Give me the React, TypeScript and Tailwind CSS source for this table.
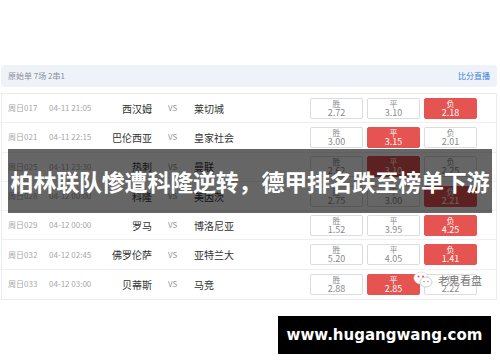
import React from 'react';

type Pick = 0 | 1 | 2;

interface Match {
  code: string;
  time: string;
  home: string;
  away: string;
  odds: [string, string, string];
  pick: Pick;
}

const matches: Match[] = [
  { code: '周日017', time: '04-11 21:05', home: '西汉姆', away: '莱切城', odds: ['2.72', '3.10', '2.18'], pick: 2 },
  { code: '周日021', time: '04-11 22:15', home: '巴伦西亚', away: '皇家社会', odds: ['3.00', '3.15', '2.01'], pick: 1 },
  { code: '周日025', time: '04-11 23:30', home: '热刺', away: '曼联', odds: ['2.62', '3.10', '2.25'], pick: 1 },
  { code: '周日028', time: '04-12 00:00', home: '科隆', away: '美因茨', odds: ['2.75', '3.00', '2.21'], pick: 2 },
  { code: '周日029', time: '04-12 00:00', home: '罗马', away: '博洛尼亚', odds: ['1.52', '3.95', '4.25'], pick: 2 },
  { code: '周日032', time: '04-12 02:45', home: '佛罗伦萨', away: '亚特兰大', odds: ['5.20', '4.05', '1.41'], pick: 2 },
  { code: '周日033', time: '04-12 03:00', home: '贝蒂斯', away: '马竞', odds: ['2.88', '2.85', '2.22'], pick: 1 },
];

const labels = ['胜', '平', '负'];

function OddsBox({ label, value, active }: { label: string; value: string; active: boolean }) {
  return (
    <div
      className={
        active
          ? 'w-[53px] h-[21px] rounded-[2px] bg-[#e55451] border border-[#e55451] text-white flex flex-col items-center justify-center leading-none'
          : 'w-[53px] h-[21px] rounded-[2px] bg-white border border-[#dcdcdc] text-[#8a8a8a] flex flex-col items-center justify-center leading-none'
      }
    >
      <span className="text-[8px] leading-[9px]">{label}</span>
      <span className="text-[9px] leading-[10px]">{value}</span>
    </div>
  );
}

function MatchRow({ m, last }: { m: Match; last: boolean }) {
  return (
    <div className={`h-[29.3px] flex items-center pl-[6px] pr-[19px] ${last ? '' : 'border-b border-[#efefef]'}`}>
      <span className="w-[41px] text-[8px] text-[#a8a8a8]">{m.code}</span>
      <span className="w-[50px] text-[8px] text-[#a8a8a8]">{m.time}</span>
      <span className="w-[53px] text-right text-[10px] text-[#333]">{m.home}</span>
      <span className="w-[42px] pl-[16px] text-[8px] text-[#9a9a9a]">VS</span>
      <span className="flex-1 text-[10px] text-[#333]">{m.away}</span>
      <div className="flex gap-[4px]">
        {m.odds.map((o, i) => (
          <OddsBox key={i} label={labels[i]} value={o} active={i === m.pick} />
        ))}
      </div>
    </div>
  );
}

export default function App() {
  return (
    <div
      className="relative w-[500px] h-[362px] bg-white overflow-hidden"
      style={{ fontFamily: '"Noto Sans CJK SC", "Noto Sans", sans-serif' }}
    >
      <div className="pt-[65px] pl-[1px] pr-[3px]">
        <div className="h-[22px] rounded-[3px] bg-[#eef3fa] flex items-center justify-between px-[7px]">
          <span className="text-[8px] text-[#8a8f99]">原始单 7场 2串1</span>
          <span className="text-[8px] text-[#3b82d6]">比分直播</span>
        </div>
        <div className="mt-[6px] border border-[#ececec]">
          {matches.map((m, i) => (
            <MatchRow key={m.code} m={m} last={i === matches.length - 1} />
          ))}
        </div>
        <div className="flex justify-end pr-[6px] mt-[16px]">
          <div className="w-[213px] h-[38px] bg-black flex items-center justify-center">
            <span
              className="text-white font-bold text-[15px]"
              style={{ fontFamily: '"DejaVu Sans", sans-serif' }}
            >
              www.hugangwang.com
            </span>
          </div>
        </div>
      </div>

      {/* watermark */}
      <div className="absolute left-[413px] top-[270px] flex items-center gap-[3px] text-[#7d7d7d]/80">
        <svg width="22" height="20" viewBox="0 0 22 20">
          <ellipse cx="8" cy="8" rx="7" ry="6" fill="#fff" stroke="#e1e1e1" strokeWidth="1" />
          <ellipse cx="13" cy="12" rx="6" ry="5" fill="#fff" stroke="#cfcfcf" strokeWidth="1" />
          <circle cx="5.5" cy="6.5" r="1" fill="#e55451" />
          <circle cx="10" cy="6.5" r="1" fill="#e55451" />
          <circle cx="11" cy="11.5" r="0.8" fill="#999" />
          <circle cx="15" cy="11.5" r="0.8" fill="#999" />
        </svg>
        <span className="text-[11px] text-[#777]" style={{ textShadow: '0 0 2px #fff' }}>老鬼看盘</span>
      </div>

      {/* headline overlay */}
      <div className="absolute left-[8px] top-[149px] w-[484px] h-[64px] bg-black/60" />
      <div className="absolute left-0 top-[149px] w-[500px] h-[64px] flex items-center justify-center">
        <span className="text-white font-bold text-[23px] whitespace-nowrap tracking-[-0.2px]">
          柏林联队惨遭科隆逆转，德甲排名跌至榜单下游
        </span>
      </div>
    </div>
  );
}
